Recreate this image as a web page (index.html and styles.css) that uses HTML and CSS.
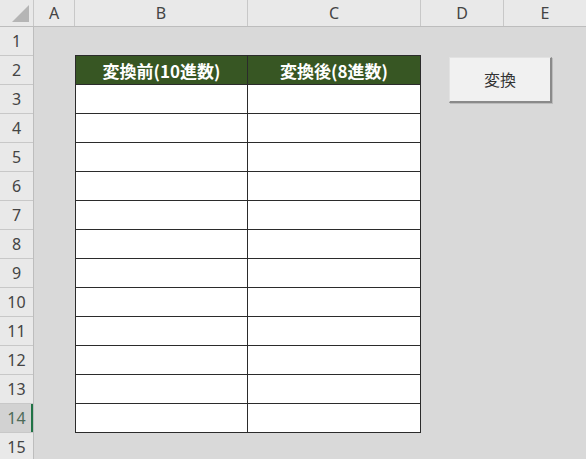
FILE: index.html
```html
<!DOCTYPE html>
<html lang="ja">
<head>
<meta charset="utf-8">
<link rel="stylesheet" href="styles.css">
</head>
<body>
<div class="sheet">
  <div class="colhead">
    <div class="corner"><span class="tri"></span></div>
    <div class="ch col-a">A</div>
    <div class="ch col-b">B</div>
    <div class="ch col-c">C</div>
    <div class="ch col-d">D</div>
    <div class="ch col-e">E</div>
  </div>
  <div class="body">
    <div class="rowhead">
      <div class="rh">1</div>
      <div class="rh">2</div>
      <div class="rh">3</div>
      <div class="rh">4</div>
      <div class="rh">5</div>
      <div class="rh">6</div>
      <div class="rh">7</div>
      <div class="rh">8</div>
      <div class="rh">9</div>
      <div class="rh">10</div>
      <div class="rh">11</div>
      <div class="rh">12</div>
      <div class="rh">13</div>
      <div class="rh active">14</div>
      <div class="rh">15</div>
    </div>
    <div class="canvas">
      <div class="table">
        <div class="cell head">変換前(10進数)</div>
        <div class="cell head">変換後(8進数)</div>
        <div class="cell"></div><div class="cell"></div>
        <div class="cell"></div><div class="cell"></div>
        <div class="cell"></div><div class="cell"></div>
        <div class="cell"></div><div class="cell"></div>
        <div class="cell"></div><div class="cell"></div>
        <div class="cell"></div><div class="cell"></div>
        <div class="cell"></div><div class="cell"></div>
        <div class="cell"></div><div class="cell"></div>
        <div class="cell"></div><div class="cell"></div>
        <div class="cell"></div><div class="cell"></div>
        <div class="cell"></div><div class="cell"></div>
        <div class="cell"></div><div class="cell"></div>
      </div>
      <div class="button">変換</div>
    </div>
  </div>
</div>
</body>
</html>
```
FILE: styles.css
```css
html, body {
  margin: 0;
  padding: 0;
}
body {
  width: 586px;
  height: 459px;
  overflow: hidden;
  background: #d9d9d9;
  font-family: "Noto Sans", "Noto Sans CJK JP", sans-serif;
}
.sheet {
  display: flex;
  flex-direction: column;
  width: 586px;
  height: 459px;
}
.colhead {
  display: flex;
  height: 26px;
  border-bottom: 1px solid #bdbdbd;
  background: #e9e9e9;
  flex: none;
}
.corner {
  width: 33px;
  border-right: 1px solid #c8c8c8;
  position: relative;
  flex: none;
}
.tri {
  position: absolute;
  right: 4px;
  bottom: 4px;
  width: 0;
  height: 0;
  border-style: solid;
  border-width: 0 0 17px 17px;
  border-color: transparent transparent #b5b5b5 transparent;
}
.ch {
  flex: none;
  border-right: 1px solid #c8c8c8;
  color: #444;
  font-size: 16px;
  line-height: 26px;
  text-align: center;
}
.col-a { width: 40px; }
.col-b { width: 172px; }
.col-c { width: 172px; }
.col-d { width: 82px; }
.col-e { width: 82px; border-right: none; }
.body {
  display: flex;
  flex: 1;
}
.rowhead {
  width: 33px;
  border-right: 1px solid #bdbdbd;
  background: #e9e9e9;
  flex: none;
  display: flex;
  flex-direction: column;
}
.rh {
  height: 28px;
  border-bottom: 1px solid #c8c8c8;
  color: #444;
  font-size: 16px;
  line-height: 29px;
  text-align: center;
  flex: none;
}
.rh.active {
  background: #d2d2d2;
  color: #4d6b59;
  box-shadow: inset -2px 0 0 #217346;
}
.canvas {
  flex: 1;
  position: relative;
  background: #d9d9d9;
  padding: 28px 0 0 41px;
}
.table {
  display: grid;
  grid-template-columns: 172px 173px;
  grid-auto-rows: 29px;
  width: 345px;
  border-left: 1px solid #2b2b2b;
  border-top: 1px solid #2b2b2b;
}
.cell {
  background: #ffffff;
  border-right: 1px solid #2b2b2b;
  border-bottom: 1px solid #2b2b2b;
}
.cell.head {
  background: #375623;
  color: #ffffff;
  font-family: "Noto Sans CJK JP", sans-serif;
  font-weight: bold;
  font-size: 17px;
  line-height: 29px;
  text-align: center;
}
.button {
  position: absolute;
  left: 415px;
  top: 30px;
  width: 100px;
  height: 43px;
  background: #f1f1f1;
  border-top: 1px solid #e2e2e2;
  border-left: 1px solid #e2e2e2;
  border-right: 2px solid #8a8a8a;
  border-bottom: 2px solid #8a8a8a;
  box-shadow: 1px 1px 0 #bcbcbc;
  color: #333;
  font-family: "Noto Sans CJK JP", sans-serif;
  font-size: 16px;
  line-height: 43px;
  text-align: center;
}
```
